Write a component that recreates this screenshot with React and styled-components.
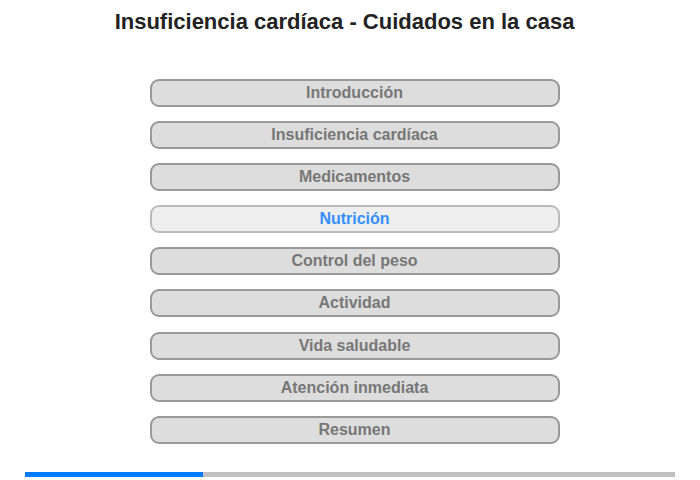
import React from "react";
import styled, { createGlobalStyle } from "styled-components";

const GlobalStyle = createGlobalStyle`
  body {
    margin: 0;
    background: #ffffff;
    font-family: "Liberation Sans", Arial, sans-serif;
  }
`;

const Page = styled.div`
  width: 700px;
  height: 480px;
  display: flex;
  flex-direction: column;
  align-items: center;
`;

const Title = styled.h1`
  margin: 0;
  padding-top: 9px;
  padding-right: 11px;
  width: 100%;
  box-sizing: border-box;
  text-align: center;
  font-size: 22px;
  line-height: 26px;
  font-weight: bold;
  color: #222222;
`;

const Menu = styled.nav`
  margin-top: 44px;
  margin-left: 9px;
  display: flex;
  flex-direction: column;
  gap: 14.1px;
`;

const Item = styled.button`
  width: 410px;
  height: 28px;
  box-sizing: border-box;
  border: 2px solid ${(p) => (p.active ? "#bbbbbb" : "#999999")};
  border-radius: 9px;
  background: ${(p) => (p.active ? "#eeeeee" : "#dddddd")};
  color: ${(p) => (p.active ? "#3390ff" : "#777777")};
  font-family: "Liberation Sans", Arial, sans-serif;
  font-size: 16px;
  font-weight: bold;
  padding: 0;
  cursor: pointer;
`;

const Progress = styled.div`
  margin-top: auto;
  margin-bottom: 3px;
  width: 650px;
  height: 5px;
  background: #c0c0c0;
  display: flex;
`;

const ProgressFill = styled.div`
  height: 100%;
  background: #007bff;
`;

const items = [
  "Introducción",
  "Insuficiencia cardíaca",
  "Medicamentos",
  "Nutrición",
  "Control del peso",
  "Actividad",
  "Vida saludable",
  "Atención inmediata",
  "Resumen",
];

export default function App() {
  return (
    <Page>
      <GlobalStyle />
      <Title>Insuficiencia cardíaca - Cuidados en la casa</Title>
      <Menu>
        {items.map((label) => (
          <Item key={label} active={label === "Nutrición"}>
            {label}
          </Item>
        ))}
      </Menu>
      <Progress>
        <ProgressFill style={{ width: "178px" }} />
      </Progress>
    </Page>
  );
}
